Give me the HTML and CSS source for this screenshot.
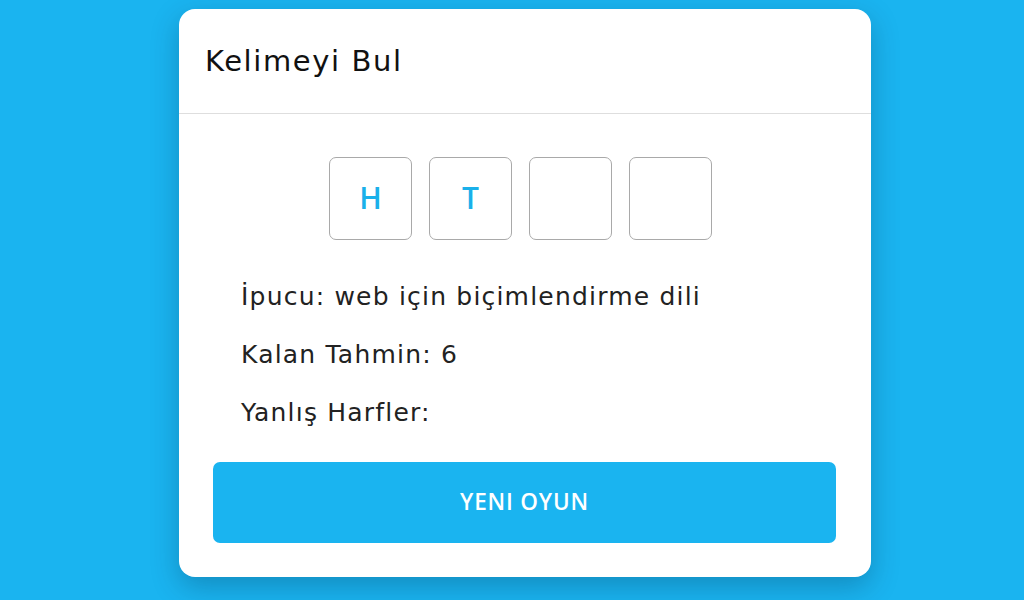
FILE: index.html
```html
<!DOCTYPE html>
<html lang="tr">
<head>
<meta charset="utf-8">
<title>Kelimeyi Bul</title>
<link rel="stylesheet" href="styles.css">
</head>
<body>
<main class="page">
  <section class="card">
    <header class="card-header">
      <h1 class="title">Kelimeyi Bul</h1>
    </header>
    <div class="card-body">
      <div class="slots">
        <div class="slot">H</div>
        <div class="slot">T</div>
        <div class="slot"></div>
        <div class="slot"></div>
      </div>
      <div class="info">
        <p class="line">İpucu: web için biçimlendirme dili</p>
        <p class="line">Kalan Tahmin: 6</p>
        <p class="line">Yanlış Harfler:</p>
      </div>
      <button class="btn" type="button">YENI OYUN</button>
    </div>
  </section>
</main>
</body>
</html>
```

FILE: styles.css
```css
* { box-sizing: border-box; }
html, body { margin: 0; padding: 0; }
body {
  width: 1024px;
  height: 600px;
  overflow: hidden;
  background: #1ab4f0;
  font-family: "DejaVu Sans", "Open Sans", sans-serif;
  color: #1a1a1a;
}
.page {
  display: flex;
  justify-content: center;
  padding-top: 9px;
  padding-left: 26px;
}
.card {
  width: 692px;
  background: #fff;
  border-radius: 16px;
  box-shadow: 0 10px 28px rgba(0, 40, 70, 0.28);
}
.card-header {
  height: 105px;
  display: flex;
  align-items: center;
  padding: 0 26px 0;
  border-bottom: 1px solid #dedede;
}
.title {
  margin: 0;
  font-size: 29px;
  font-weight: normal;
  letter-spacing: 1.6px;
  color: #111;
}
.card-body {
  padding: 43px 35px 34px 34px;
}
.slots {
  display: flex;
  justify-content: center;
  gap: 17px;
  padding-right: 8px;
}
.slot {
  width: 83px;
  height: 83px;
  border: 1px solid #a9a9a9;
  border-radius: 7px;
  display: flex;
  align-items: center;
  justify-content: center;
  color: #1ab0ea;
  font-family: "Open Sans", "Noto Sans", sans-serif;
  font-size: 30px;
  font-weight: 600;
  padding-bottom: 2px;
}
.info {
  padding: 28px 0 20px 28px;
}
.line {
  margin: 0;
  height: 58px;
  line-height: 58px;
  font-size: 25px;
  letter-spacing: 1.2px;
  color: #222;
}
.btn {
  display: block;
  width: 100%;
  height: 81px;
  border: none;
  border-radius: 7px;
  background: #1ab4f0;
  color: #fff;
  font-family: "Open Sans", "Noto Sans", sans-serif;
  font-size: 22.5px;
  font-weight: 600;
  letter-spacing: 0.8px;
  padding: 0 0 2px;
}
```
